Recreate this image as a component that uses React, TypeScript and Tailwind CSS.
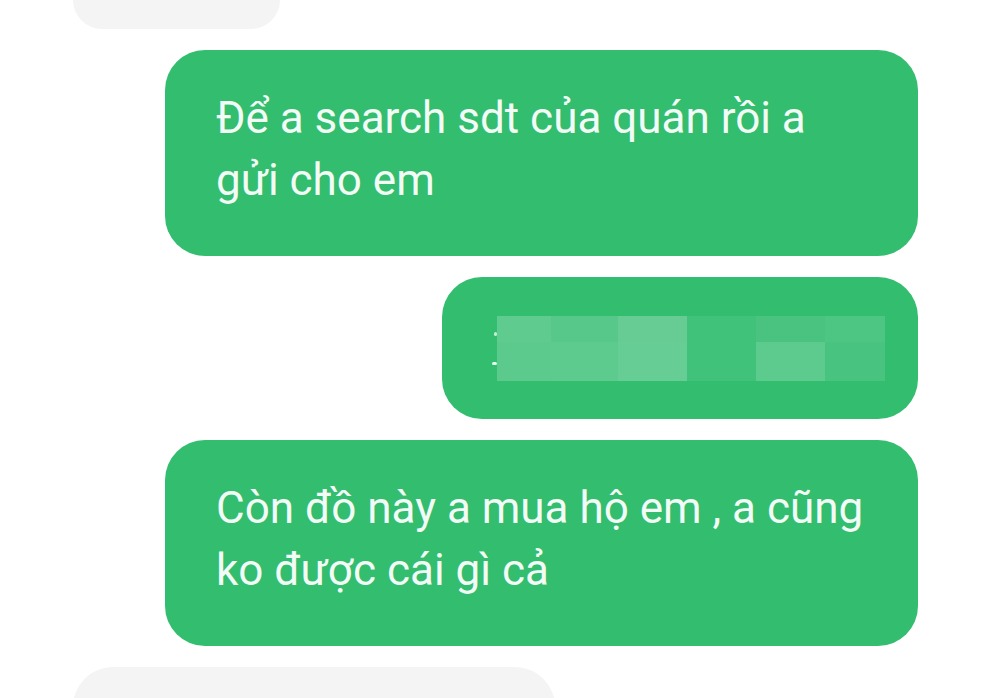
const cells: { w: number; top: string; bottom: string }[] = [
  { w: 54, top: "#5fcb8f", bottom: "#5dca8d" },
  { w: 67, top: "#58c88a", bottom: "#5ccb8d" },
  { w: 69, top: "#66cc94", bottom: "#66cd95" },
  { w: 69, top: "#40c27a", bottom: "#41c27a" },
  { w: 69, top: "#49c37f", bottom: "#5ccb8d" },
  { w: 60, top: "#4dc583", bottom: "#48c480" },
];

function Bubble({ lines }: { lines: string[] }) {
  return (
    <div className="w-[753px] self-end rounded-[40px] bg-[#33bd6f] pl-[51px] pt-[37px] pb-[45px] text-[44px] leading-[62px] text-[#f2fbf5]">
      {lines.map((l) => (
        <div key={l} className="whitespace-nowrap">
          {l}
        </div>
      ))}
    </div>
  );
}

export default function App() {
  return (
    <div
      className="h-[698px] w-[990px] overflow-hidden bg-white pr-[72px]"
      style={{ fontFamily: "Roboto, 'Noto Sans', sans-serif" }}
    >
      <div className="flex flex-col gap-[21px]">
        <div className="ml-[73px] h-[29px] w-[207px] rounded-b-[30px] bg-[#f4f4f4]" />

        <Bubble lines={["Để a search sdt của quán rồi a", "gửi cho em"]} />

        <div className="relative flex h-[142px] w-[476px] items-center self-end rounded-[40px] bg-[#33bd6f] pl-[55px]">
          <div className="absolute left-[52px] top-[55px] h-[4px] w-[3px] rounded-sm bg-[#bfeed3]" />
          <div className="absolute left-[50px] top-[85px] h-[3px] w-[5px] rounded-sm bg-[#e8f8ee]" />
          <div className="flex h-[65px] flex-row">
            {cells.map((c, i) => (
              <div key={i} className="flex flex-col" style={{ width: c.w }}>
                <div className="h-[26px]" style={{ background: c.top }} />
                <div className="h-[39px]" style={{ background: c.bottom }} />
              </div>
            ))}
          </div>
        </div>

        <Bubble lines={["Còn đồ này a mua hộ em , a cũng", "ko được cái gì cả"]} />

        <div className="ml-[73px] h-[60px] w-[482px] rounded-t-[40px] bg-[#f4f4f4]" />
      </div>
    </div>
  );
}
